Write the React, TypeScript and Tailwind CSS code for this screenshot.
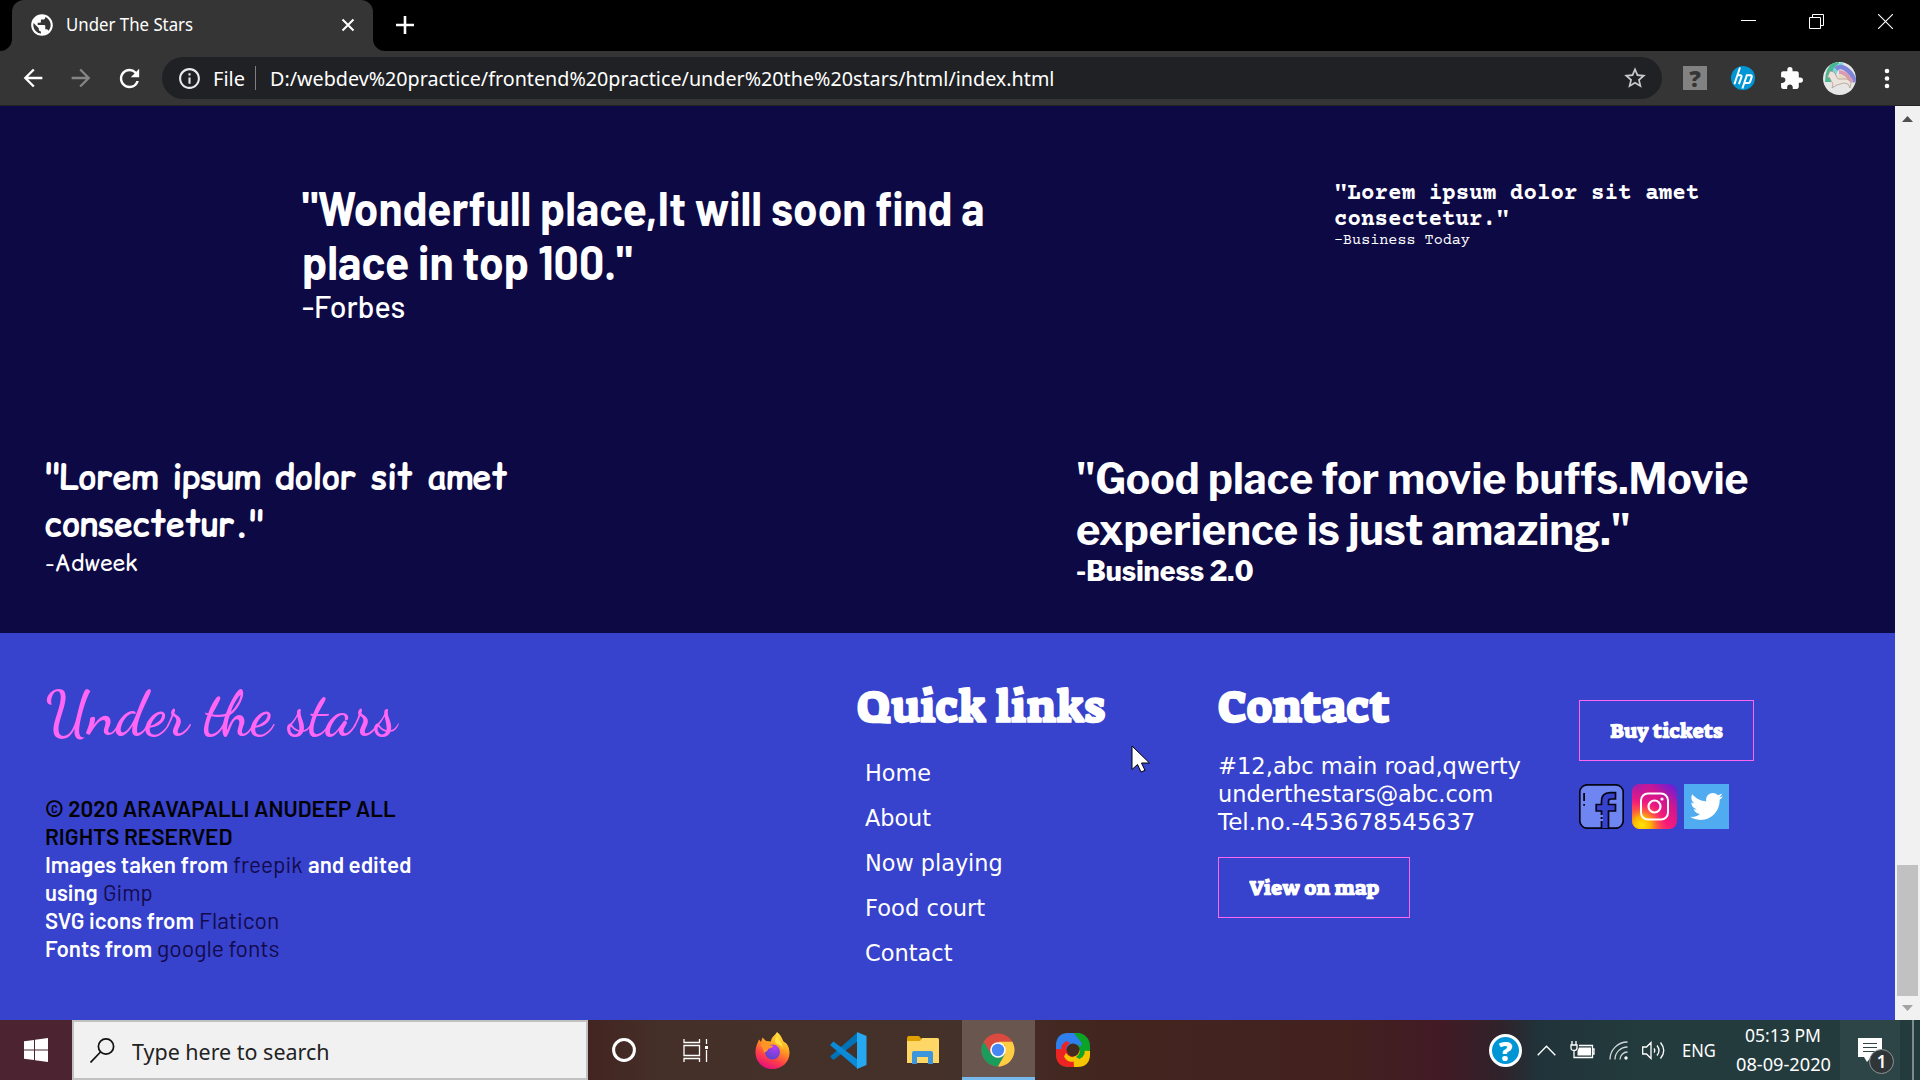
import { useLayoutEffect, useRef, useState } from "react";
import type { ReactNode } from "react";
import {
  MdArrowBack,
  MdArrowForward,
  MdExtension,
  MdInfoOutline,
  MdPublic,
  MdRefresh,
  MdStarBorder,
} from "react-icons/md";
import { FaTwitter } from "react-icons/fa";

/* A single line of text, condensed or widened so that it spans `w` pixels. */
function Fit({ w, className = "", children }: { w: number; className?: string; children: ReactNode }) {
  const ref = useRef<HTMLSpanElement>(null);
  const [k, setK] = useState(1);
  useLayoutEffect(() => {
    if (ref.current) setK(w / ref.current.offsetWidth);
  }, [w]);
  return (
    <span className={`block shrink-0 whitespace-pre ${className}`} style={{ width: w }}>
      <span ref={ref} className="inline-block origin-left" style={{ transform: `scaleX(${k})` }}>
        {children}
      </span>
    </span>
  );
}

function TabStrip() {
  return (
    <div className="flex h-[51px] bg-black text-white">
      <svg className="w-3 shrink-0" viewBox="0 0 12 51">
        <path d="M12 51V39a12 12 0 0 1-12 12z" fill="#353535" />
      </svg>
      <div className="flex w-[361px] shrink-0 items-center rounded-t-[12px] bg-[#353535] pb-[2px] pl-[17px]">
        <MdPublic className="size-[26px]" />
        <Fit w={127} className="-mt-px ml-[11px] text-[18px] leading-6">Under The Stars</Fit>
        <svg className="mt-[1px] ml-[148px] size-[14px]" viewBox="0 0 14 14" stroke="#fff" strokeWidth="2">
          <path d="M1.5 1.5l11 11M12.5 1.5l-11 11" />
        </svg>
      </div>
      <svg className="w-3 shrink-0" viewBox="0 0 12 51">
        <path d="M0 51V39a12 12 0 0 0 12 12z" fill="#353535" />
      </svg>
      <svg className="mt-4 ml-[11px] size-[18px]" viewBox="0 0 18 18" stroke="#fff" strokeWidth="2.6">
        <path d="M9 0v18M0 9h18" />
      </svg>
      <div className="mt-[14px] ml-auto flex">
        <svg className="mr-[53px] size-[15px]" viewBox="0 0 15 15">
          <path d="M0 6h15v1H0z" fill="#fff" />
        </svg>
        <svg className="mr-[54px] size-[15px]" viewBox="0 0 15 15" fill="none" stroke="#fff">
          <path d="M.5 3.5h11v11H.5zM3.5 3V.5h11v11H12" />
        </svg>
        <svg className="mr-[27px] size-[15px]" viewBox="0 0 15 15" stroke="#fff" strokeWidth="1.1">
          <path d="M0 0l15 15M15 0L0 15" />
        </svg>
      </div>
    </div>
  );
}

function Toolbar() {
  return (
    <div className="flex h-[55px] items-center border-b border-[#242424] bg-[#353535] text-white">
      <MdArrowBack className="ml-[19px] size-[28px] shrink-0" />
      <MdArrowForward className="ml-[20px] size-[28px] shrink-0 text-[#868686]" />
      <MdRefresh className="ml-[20px] size-[29px] shrink-0" />
      <div className="ml-[18px] flex h-[42px] w-[1500px] shrink-0 items-center rounded-full bg-[#202124] pl-[15px]">
        <MdInfoOutline className="size-[25px] text-[#e8eaed]" />
        <Fit w={32} className="mt-px ml-[11px] text-[20px] leading-7">File</Fit>
        <div className="ml-[10px] h-6 w-px shrink-0 bg-[#7d8083]" />
        <Fit w={784} className="mt-px ml-[14px] text-[20px] leading-7">
          D:/webdev%20practice/frontend%20practice/under%20the%20stars/html/index.html
        </Fit>
        <MdStarBorder className="mr-[14px] ml-auto size-[26px] text-[#c8c9ca]" />
      </div>
      <div className="ml-[21px] flex size-6 items-center justify-center bg-[#828282] text-[23px] leading-none font-black text-[#353535]">
        ?
      </div>
      <svg className="ml-6 size-6" viewBox="0 0 24 24">
        <circle cx="12" cy="12" r="12" fill="#0096d6" />
        <path
          d="M9 1.5L3.4 18.2M6 9.2h3.4q1.6.1 1.1 1.700l-2.600 7.300M15.800 9.200h3.800q1.600.1 1.100 1.700l-1.500 4.700q-.4 1.300-1.800 1.300h-3.600M16.100 8.500L11.400 22.500"
          fill="none"
          stroke="#fff"
          strokeWidth="2"
        />
      </svg>
      <MdExtension className="ml-[24px] size-[25px]" />
      <svg className="ml-[19px] size-[33px]" viewBox="0 0 33 33">
        <defs>
          <clipPath id="avatar">
            <circle cx="16.5" cy="16.5" r="16.5" />
          </clipPath>
        </defs>
        <g clipPath="url(#avatar)">
          <path d="M0 0h33v33H0z" fill="#e6e6e6" />
          <g fill="none" strokeWidth="4.6">
            <path d="M5 20C5 9 9 3 16 1" stroke="#48b893" strokeWidth="6" />
            <path d="M11 18C10 8 14 4 20 2" stroke="#80d4dd" />
            <path d="M13 7q4-4 10 0t9 13" stroke="#7d85dc" />
            <path d="M16 10q7 0 13 10" stroke="#d99bb0" strokeWidth="4" />
            <path d="M16 14q6 1 9 7" stroke="#ead9b8" strokeWidth="3" />
          </g>
          <path d="M7 9l4 1 4 7 9 0 4 3-1 6-2-4-4-1-7 2-5 3 1-4-4-7-2 1z" fill="#ece4dc" stroke="#a89585" strokeWidth=".7" />
        </g>
      </svg>
      <svg className="mr-[30px] ml-auto h-[21px] w-[6px]" viewBox="0 0 6 21" fill="#fff">
        <circle cx="3" cy="3" r="2.3" />
        <circle cx="3" cy="10.5" r="2.3" />
        <circle cx="3" cy="18" r="2.3" />
      </svg>
    </div>
  );
}

function Quotes() {
  return (
    <section className="h-[527px] bg-[#0d0945] text-white">
      <div className="flex h-[346px] pt-[74px] pl-[302px]">
        <div className="w-[1032px] font-['Barlow','Roboto',sans-serif]">
          <Fit w={683} className="text-[48px] leading-[54px] font-bold">"Wonderfull place,It will soon find a</Fit>
          <Fit w={330} className="text-[48px] leading-[54px] font-bold">place in top 100."</Fit>
          <Fit w={103} className="text-[30px] leading-9 font-medium">-Forbes</Fit>
        </div>
        <div className="mt-px font-['Courier_Prime','Liberation_Mono',monospace]">
          <Fit w={365} className="text-[22.5px] leading-[26px] font-bold">"Lorem ipsum dolor sit amet</Fit>
          <Fit w={175} className="text-[22.5px] leading-[26px] font-bold">consectetur."</Fit>
          <Fit w={136} className="text-[15px] leading-4">-Business Today</Fit>
        </div>
      </div>
      <div className="flex pl-[44px]">
        <div className="mt-[2px] w-[1032px] font-['Comic_Relief','Comic_Neue','Noto_Sans',sans-serif]">
          <Fit w={462} className="ml-px text-[34px] leading-[47px] font-bold">"Lorem ipsum dolor sit amet</Fit>
          <Fit w={219} className="ml-px text-[34px] leading-[47px] font-bold">consectetur."</Fit>
          <Fit w={92} className="-mt-px ml-px text-[22.5px] leading-[33px]">-Adweek</Fit>
        </div>
        <div className="mt-px font-['Libre_Franklin','Liberation_Sans',sans-serif] font-bold">
          <Fit w={672} className="text-[42px] leading-[51px]">"Good place for movie buffs.Movie</Fit>
          <Fit w={554} className="text-[42px] leading-[51px]">experience is just amazing."</Fit>
          <Fit w={178} className="text-[27px] leading-[34px] font-extrabold">-Business 2.0</Fit>
        </div>
      </div>
    </section>
  );
}

const links: [string, number][] = [
  ["Home", 66],
  ["About", 66],
  ["Now playing", 138],
  ["Food court", 120],
  ["Contact", 87],
];

function Outlined({ className, w, children }: { className: string; w: number; children: ReactNode }) {
  return (
    <div className={`flex h-[61px] items-center justify-center border border-[#ff66f4] ${className}`}>
      <Fit w={w} className="font-['Suez_One','DejaVu_Serif',serif] text-[20px] leading-7 font-bold">{children}</Fit>
    </div>
  );
}

function Footer() {
  return (
    <footer className="flex h-[387px] bg-[#3742cd] pl-[45px] text-white">
      <div className="w-[812px] pt-[41px] font-['Barlow','Roboto',sans-serif]">
        <Fit w={352} className="font-['Dancing_Script','Liberation_Serif',cursive] text-[62px] leading-[80px] font-semibold text-[#ff66f4]">
          Under the stars
        </Fit>
        <div className="mt-[40px] text-[22.5px] leading-7 font-semibold">
          <Fit w={351} className="text-black">© 2020 ARAVAPALLI ANUDEEP ALL</Fit>
          <Fit w={187} className="text-black">RIGHTS RESERVED</Fit>
          <div className="flex gap-[5px]">
            <Fit w={183}>Images taken from</Fit>
            <Fit w={70} className="font-normal text-[#130a4b]">freepik</Fit>
            <Fit w={103}>and edited</Fit>
          </div>
          <div className="flex gap-[5px]">
            <Fit w={53}>using</Fit>
            <Fit w={50} className="font-normal text-[#130a4b]">Gimp</Fit>
          </div>
          <div className="flex gap-[5px]">
            <Fit w={149}>SVG icons from</Fit>
            <Fit w={80} className="font-normal text-[#130a4b]">Flaticon</Fit>
          </div>
          <div className="flex gap-[5px]">
            <Fit w={107}>Fonts from</Fit>
            <Fit w={123} className="font-normal text-[#130a4b]">google fonts</Fit>
          </div>
        </div>
      </div>

      <div className="w-[360px] pt-[46px]">
        <Fit w={248} className="font-['Suez_One','DejaVu_Serif',serif] text-[45px] leading-[57px] font-bold">Quick links</Fit>
        <div className="mt-[15px] ml-[8px] font-['DejaVu_Sans',sans-serif] text-[23px] leading-[45px]">
          {links.map(([label, w]) => (
            <Fit key={label} w={w}>{label}</Fit>
          ))}
        </div>
      </div>

      <div className="w-[362px] pt-[46px]">
        <Fit w={172} className="ml-px font-['Suez_One','DejaVu_Serif',serif] text-[45px] leading-[57px] font-bold">Contact</Fit>
        <div className="mt-[16px] ml-px font-['DejaVu_Sans',sans-serif] text-[23px] leading-7">
          <Fit w={303}>#12,abc main road,qwerty</Fit>
          <Fit w={275}>underthestars@abc.com</Fit>
          <Fit w={257}>Tel.no.-453678545637</Fit>
        </div>
        <Outlined className="mt-[21px] ml-px w-[192px]" w={130}>View on map</Outlined>
      </div>

      <div className="pt-[67px]">
        <Outlined className="w-[175px]" w={113}>Buy tickets</Outlined>
        <div className="mt-[23px] flex">
          <svg className="size-[45px]" viewBox="0 0 45 45">
            <rect x=".8" y=".8" width="43.4" height="43.4" rx="7.5" fill="#6f86f2" stroke="#050514" strokeWidth="1.7" />
            <path
              d="M22.5 44V27h-5.3v-6.5h5.3V17q0-8 8.5-8.3h5.5V15h-4.7q-2.3 0-2.3 2.4v3.1h7V27h-7v17"
              fill="#3742cd"
              stroke="#050514"
              strokeWidth="1.7"
            />
            <path d="M4.2 9h1.8v8H4.2zM4.2 20h1.8v1.8H4.2z" fill="#050514" />
            <path d="M21 31h3v2h-3zM21 35h3v2h-3z" fill="#6f86f2" />
          </svg>
          <svg className="ml-2 size-[45px]" viewBox="0 0 45 45">
            <defs>
              <linearGradient id="igBase" x1=".1" y1="1" x2=".9" y2="0">
                <stop offset="0" stopColor="#ff6a1a" />
                <stop offset=".4" stopColor="#f8197c" />
                <stop offset=".7" stopColor="#d0158f" />
                <stop offset="1" stopColor="#6a1fd8" />
              </linearGradient>
              <radialGradient id="igGlow" cx=".22" cy=".92" r=".55">
                <stop offset="0" stopColor="#ffe600" />
                <stop offset=".35" stopColor="#ffb500" />
                <stop offset="1" stopColor="#ff2a6a" stopOpacity="0" />
              </radialGradient>
              <radialGradient id="igViolet" cx=".1" cy="0" r=".5">
                <stop offset="0" stopColor="#a01fb0" />
                <stop offset="1" stopColor="#d0158f" stopOpacity="0" />
              </radialGradient>
            </defs>
            <rect width="45" height="45" rx="8" fill="url(#igBase)" />
            <rect width="45" height="45" rx="8" fill="url(#igViolet)" />
            <rect width="45" height="45" rx="8" fill="url(#igGlow)" />
            <rect x="9" y="9.5" width="27" height="26" rx="7" fill="none" stroke="#fff" strokeWidth="2" />
            <circle cx="22.5" cy="22.5" r="6" fill="none" stroke="#fff" strokeWidth="2.2" />
            <circle cx="30" cy="15" r="1.6" fill="#fff" />
          </svg>
          <div className="ml-[7px] flex size-[45px] items-center justify-center bg-[#50abf1]">
            <FaTwitter className="size-[33px]" />
          </div>
        </div>
      </div>
    </footer>
  );
}

function ScrollBar() {
  return (
    <div className="flex w-[25px] flex-col items-center bg-[#f1f1f1]">
      <svg className="mt-[10px] h-[6px] w-[11px]" viewBox="0 0 11 6">
        <path d="M5.5 0L11 6H0z" fill="#505050" />
      </svg>
      <div className="mt-[743px] h-[131px] w-[21px] bg-[#c1c1c1]" />
      <svg className="mt-[9px] h-[6px] w-[11px]" viewBox="0 0 11 6">
        <path d="M5.5 6L11 0H0z" fill="#a3a3a3" />
      </svg>
    </div>
  );
}

function Firefox() {
  return (
    <svg className="h-[37px] w-[35px]" viewBox="0 0 35 37">
      <defs>
        <linearGradient id="ffBody" x1=".8" y1="0" x2=".35" y2="1">
          <stop offset="0" stopColor="#fff04a" />
          <stop offset=".4" stopColor="#ffa01f" />
          <stop offset=".72" stopColor="#ff4047" />
          <stop offset="1" stopColor="#e3107d" />
        </linearGradient>
        <radialGradient id="ffGlobe" cx=".65" cy=".2" r=".9">
          <stop offset="0" stopColor="#b53cf0" />
          <stop offset="1" stopColor="#5146c8" />
        </radialGradient>
      </defs>
      <path
        d="M22 0c5 4 4.5 6.5 7 10 3 1 5.5 5.5 5.5 11C34.5 30 27 37 17.5 37S.5 30 .5 20.5c0-6 2-9 3.5-13L6 10 7.5 5.5 11 9l5 .5C16 5 20 4 22 0z"
        fill="url(#ffBody)"
      />
      <circle cx="17.5" cy="20" r="7.5" fill="url(#ffGlobe)" />
      <path d="M5 13c5-3 8 1 13 .5 1 2-3 3-5 3.5 0 3-3 2-3.5 4-2-3-1-6-4.5-8z" fill="#ff9428" />
      <path d="M22 4c3 6 6 7 6 14-1-4-3-5-6-6-3-2-2-5 0-8z" fill="#ffe13d" />
    </svg>
  );
}

function TaskIcons() {
  return (
    <>
      <svg className="ml-[24px] size-[24px]" viewBox="0 0 24 24" fill="none">
        <circle cx="12" cy="12" r="10.4" stroke="#fff" strokeWidth="3" />
      </svg>
      <svg className="ml-[47px] size-[25px]" viewBox="0 0 25 25" fill="none" stroke="#fff" strokeWidth="1.3">
        <path d="M1 1v3.5h15.5V1M1 24v-3.5h15.5V24M1 7.5h15.5v10H1zM23.5 1v5M23.5 12v12" />
        <path d="M22 8h3v3h-3z" fill="#fff" stroke="none" />
      </svg>
      <div className="ml-[47px]">
        <Firefox />
      </div>
      <svg className="ml-[40px] size-[37px]" viewBox="0 0 37 37">
        <path d="M0 24.5L3.5 28 28 9V0z" fill="#0073b8" />
        <path d="M0 13l3.5-3.5L28 28v9z" fill="#0b8ad8" />
        <path d="M27 0l9.5 4v29L27 37z" fill="#27a9f2" />
      </svg>
      <svg className="ml-[40px] h-[28px] w-[33px]" viewBox="0 0 33 28">
        <path d="M0 2q0-2 2-2h10l2.5 3v4H0z" fill="#e0a000" />
        <path d="M0 5h13l2-3h15.5q1.5 0 1.5 1.5V27H0z" fill="#ffd767" />
        <path d="M5 28V17q0-2 2-2h17q2 0 2 2v11h-5v-7H10v7z" fill="#3c96dd" />
      </svg>
      <div className="ml-[22px] flex h-full w-[73px] items-center justify-center border-b-[3px] border-[#76b9ed] bg-[#68564f]">
        <svg className="mt-[3px] mr-px size-[34px]" viewBox="0 0 34 34">
          <circle cx="17" cy="17" r="16.5" fill="#da4a3f" />
          <path d="M2.71 8.75A16.5 16.5 0 0 0 17 33.5L24.1 21.1 17 25l-7-4z" fill="#1a9d5c" />
          <path d="M17 33.5A16.5 16.5 0 0 0 31.3 8.8H17l7 4 0 8.2z" fill="#fdce42" />
          <circle cx="17" cy="17" r="7.8" fill="#fff" />
          <circle cx="17" cy="17" r="6.2" fill="#4687f4" />
        </svg>
      </div>
      <svg className="ml-[20px] size-[36px]" viewBox="0 0 36 36">
        <rect x="1" y="1" width="34" height="34" rx="13" fill="#0ca329" />
        <path d="M18 18L35 19v3q0 13-13 13h-8q-3 0-6-3z" fill="#f7c500" />
        <path d="M18 18l1 17h-5Q1 35 1 22v-8q0-3 3-6z" fill="#ee2323" />
        <path d="M18 18L1 17v-3Q1 1 14 1h8q3 0 6 3z" fill="#2f80ee" />
        <path d="M19 1h3q5 0 8 3l-3 8z" fill="#0ca329" />
        <path d="M16 7q7-3 11 4.5L25 15q-3-5-10-4z" fill="#2f80ee" />
        <path d="M29 16q3 7-4.500 11L21 25q5-3 4-10z" fill="#0ca329" />
        <path d="M20 29q-7 3-11-4.500L11 21q3 5 10 4z" fill="#f7c500" />
        <path d="M7 20q-3-7 4.500-11L15 11q-5 3-4 10z" fill="#ee2323" />
        <circle cx="18" cy="18" r="6.500" fill="#43291f" />
      </svg>
    </>
  );
}

function TaskBar() {
  return (
    <div className="flex h-[60px] items-center bg-[linear-gradient(90deg,#4b2331_0,#4b2331_72px,#432420_588px,#443028_660px,#44312a_960px,#43251f_1100px,#42211f_1350px,#421a25_1440px,#30222a_1500px,#20333a_1540px,#233b3d_1640px,#233b3d_1920px)] text-white">
      <div className="flex w-[72px] shrink-0 justify-center">
        <svg className="size-6" viewBox="0 0 24 24" fill="#fff">
          <path d="M0 3.3L10 2v9.5H0zM11 1.8L24 0v11.5H11zM0 12.5h10V22L0 20.7zM11 12.5h13V24l-13-1.8z" />
        </svg>
      </div>
      <div className="flex h-full w-[516px] shrink-0 items-center border-2 border-[#c1c1c1] bg-[#f1f1f1] text-[#222]">
        <svg className="ml-4 size-[25px]" viewBox="0 0 25 25" fill="none" stroke="#111" strokeWidth="1.7">
          <circle cx="16" cy="8.5" r="7.6" />
          <path d="M10.5 14L.5 24.5" />
        </svg>
        <Fit w={198} className="mt-[1px] ml-[17px] text-[22px] leading-7">Type here to search</Fit>
      </div>
      <TaskIcons />
      <div className="ml-auto flex h-full items-center">
        <div className="flex size-[33px] items-center justify-center rounded-full border-[3px] border-white bg-[#0096d6] text-[27px] leading-none font-black">
          ?
        </div>
        <svg className="ml-[15px] h-[11px] w-[19px]" viewBox="0 0 19 11" fill="none" stroke="#fff" strokeWidth="1.4">
          <path d="M.7 10.3l8.8-9 8.8 9" />
        </svg>
        <svg className="ml-[14px] h-[18px] w-[25px]" viewBox="0 0 25 18" fill="none" stroke="#fff" strokeWidth="1.3">
          <path d="M9 4.5h13.5V16.5H5M22.5 8h1.5v5h-1.5M2 0v4M6 0v4M1 4h6v3q0 2.5-3 2.5T1 7zM4 9.5v7h2" />
          <path d="M9 6.5h12v8H7.5V10z" fill="#fff" stroke="none" />
        </svg>
        <svg className="ml-[14px] size-[19px]" viewBox="0 0 19 19" fill="none" stroke="#fff" strokeWidth="1.3">
          <path d="M1 18.5A17.5 17.5 0 0 1 18.5 1M6 18.5A12.5 12.5 0 0 1 18.5 6M11 18.5a7.5 7.5 0 0 1 7.5-7.5" opacity=".8" />
          <circle cx="17" cy="17" r="1.7" fill="#fff" stroke="none" />
        </svg>
        <svg className="ml-[14px] h-[19px] w-[23px]" viewBox="0 0 23 19" fill="none" stroke="#fff" strokeWidth="1.3">
          <path d="M.7 6v7h3.8l4.5 4.500v-16L4.500 6zM12 7.500q1.500 2 0 4M15 4.500q4 5 0 10M18.500 1.500q6.500 8 0 16" />
        </svg>
        <Fit w={34} className="ml-[17px] text-[18px] leading-6">ENG</Fit>
        <div className="mt-[2px] ml-[19px] flex w-[96px] flex-col items-center text-[18px] leading-7">
          <Fit w={76} className="-mt-[3px]">05:13 PM</Fit>
          <Fit w={95} className="mt-px">08-09-2020</Fit>
        </div>
        <div className="relative ml-[9px] flex h-full w-[60px] bg-[#2e4547] pt-[18px] pl-[18px]">
          <svg className="h-[24px] w-6" viewBox="0 0 24 24">
            <path d="M0 0h24v19H13l-4 5-3-5H0z" fill="#fff" />
            <path d="M5 5.5h14M5 9.5h14M5 13.5h14" stroke="#2e4547" strokeWidth="1.2" />
          </svg>
          <div className="absolute top-[29px] left-[29px] flex size-[25px] items-center justify-center rounded-full border border-[#8b9495] bg-[#303638] text-[17px] leading-none font-semibold">
            1
          </div>
        </div>
        <div className="mr-[6px] ml-3 h-full w-[2px] bg-[#7d8b8c]" />
      </div>
    </div>
  );
}

export default function App() {
  return (
    <div className="relative flex h-[1080px] w-[1920px] flex-col overflow-hidden font-['Segoe_UI','Noto_Sans',sans-serif]">
      <TabStrip />
      <Toolbar />
      <div className="flex h-[914px]">
        <main className="w-[1895px]">
          <Quotes />
          <Footer />
        </main>
        <ScrollBar />
      </div>
      <TaskBar />
      <svg className="absolute top-[745px] left-[1131px] h-[28px] w-[20px]" viewBox="0 0 20 28">
        <path d="M1 1v23.5l5.5-5L10 27l4-1.7-3.5-7.3H18.5z" fill="#fff" stroke="#000" strokeWidth="1" />
      </svg>
    </div>
  );
}
